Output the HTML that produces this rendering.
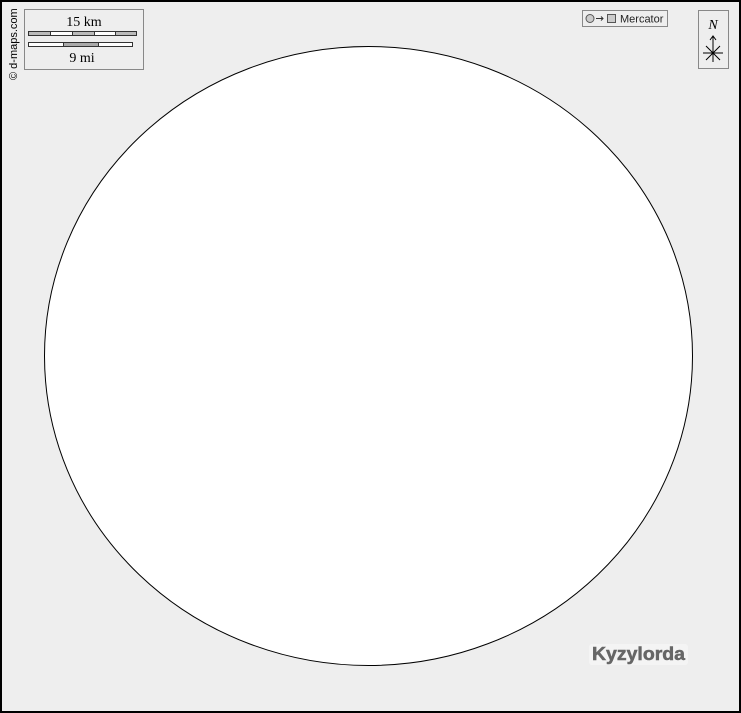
<!DOCTYPE html>
<html><head><style>html,body{margin:0;padding:0;background:#fff}svg{display:block}</style></head>
<body>
<svg width="741" height="713" viewBox="0 0 741 713" xmlns="http://www.w3.org/2000/svg">
<rect x="1" y="1" width="739" height="711" fill="#eeeeee" stroke="#000" stroke-width="2"/>
<ellipse cx="368.5" cy="356" rx="324" ry="309.5" fill="#fff" stroke="#000" stroke-width="1"/>
<rect x="24.5" y="9.5" width="119" height="60" fill="#eeeeee" stroke="#888"/>
<text x="84" y="26" font-family="Liberation Serif, serif" font-size="14" text-anchor="middle">15 km</text>
<rect x="28.5" y="31.5" width="108" height="4" fill="#fff" stroke="#333"/>
<rect x="29" y="32" width="22" height="3" fill="#bbb"/><rect x="72" y="32" width="22" height="3" fill="#bbb"/><rect x="115" y="32" width="21" height="3" fill="#bbb"/>
<path d="M50.5 31v5M72.5 31v5M94.5 31v5M115.5 31v5" stroke="#333"/>
<rect x="28.5" y="42.5" width="104" height="4" fill="#fff" stroke="#333"/>
<rect x="64" y="43" width="34" height="3" fill="#aaa"/>
<path d="M63.5 42v5M98.5 42v5" stroke="#333"/>
<text x="82" y="62" font-family="Liberation Serif, serif" font-size="14" text-anchor="middle">9 mi</text>
<text transform="translate(17,80) rotate(-90)" font-family="Liberation Sans, sans-serif" font-size="11">© d-maps.com</text>
<rect x="582.5" y="10.5" width="85" height="16" fill="#eeeeee" stroke="#888"/>
<circle cx="590" cy="18.5" r="4" fill="#ccc" stroke="#555"/>
<path d="M596 18.5h7M601 16.5l2 2-2 2" stroke="#333" fill="none"/>
<rect x="607.5" y="14.5" width="8" height="8" fill="#ccc" stroke="#555"/>
<text x="620" y="22.5" font-family="Liberation Sans, sans-serif" font-size="11" fill="#222">Mercator</text>
<rect x="698.5" y="10.5" width="30" height="58" fill="#eeeeee" stroke="#888"/>
<text x="713" y="29" font-family="Liberation Serif, serif" font-size="14" font-style="italic" text-anchor="middle">N</text>
<path d="M713 36v26M703 53h20M706 46l14 14M720 46l-14 14M710 40l3-4 3 4" stroke="#000" fill="none" stroke-width="1"/>
<rect x="589" y="644" width="99" height="21" rx="3" fill="#f4f4f4"/>
<text x="592" y="660" font-family="Liberation Sans, sans-serif" font-size="18" font-weight="bold" fill="#666" textLength="93" lengthAdjust="spacingAndGlyphs" stroke="#666" stroke-width="0.5">Kyzylorda</text>
</svg>
</body></html>
